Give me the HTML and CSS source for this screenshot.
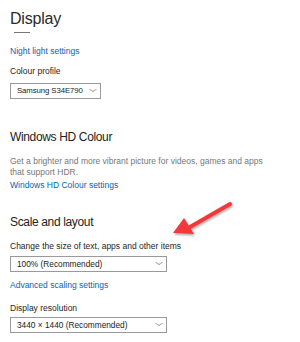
FILE: index.html
```html
<html>
<head>
<meta name="viewport" content="width=device-width, initial-scale=1" />
<title>Display</title>
<link rel="stylesheet" href="styles.css">
</head>
<body>

<div class="page">
    <h1>Display</h1>
    <div class="rule"></div>

    <a class="link night">Night light settings</a>
    <div class="label profile">Colour profile</div>
    <div class="select narrow">Samsung S34E790<span class="chev"></span></div>

    <h2 class="hd">Windows HD Colour</h2>
    <p class="desc">Get a brighter and more vibrant picture for videos, games and apps that support HDR.</p>
    <a class="link hdlink">Windows HD Colour settings</a>

    <h2 class="scale">Scale and layout</h2>
    <div class="label size">Change the size of text, apps and other items</div>
    <div class="select s2">100% (Recommended)<span class="chev"></span></div>
    <a class="link adv">Advanced scaling settings</a>
    <div class="label res">Display resolution</div>
    <div class="select s3">3440 × 1440 (Recommended)<span class="chev"></span></div>

    <svg class="arrow" width="80" height="50" viewBox="0 0 80 50">
        <defs>
            <filter id="sh" x="-20%" y="-20%" width="140%" height="140%">
                <feDropShadow dx="1" dy="1.5" stdDeviation="1" flood-color="#000" flood-opacity="0.35" />
            </filter>
        </defs>
        <g filter="url(#sh)">
            <line x1="60" y1="6" x2="20" y2="29" stroke="#f2393b" stroke-width="4" stroke-linecap="round" />
            <polygon points="3,35 14,20 24,36" fill="#f2393b" />
        </g>
    </svg>
</div>

</body>
</html>
```

FILE: styles.css
```css
body { margin: 0; background: #fff; font-family: "Liberation Sans", Arial, sans-serif; color: #1e1e1e; }
.page { position: relative; padding: 9px 0 0 10px; }
h1 { font-size: 16px; font-weight: normal; line-height: 20px; margin: 0; color: #2a2a2a; letter-spacing: -0.2px; }
.rule { width: 16px; height: 1px; background: #777; margin: 3px 0 0 4px; }
.link { display: block; font-size: 8.5px; line-height: 11px; color: #0067b8; text-decoration: none; }
.label { font-size: 8.5px; line-height: 11px; }
.select { position: relative; box-sizing: border-box; width: 157px; height: 16px; border: 1px solid #9a9a9a; font-size: 8.3px; line-height: 14px; padding-left: 6px; color: #222; }
.select.narrow { width: 91px; font-size: 7.8px; letter-spacing: -0.1px; }
.chev { position: absolute; right: 3px; top: 4px; width: 8px; height: 4px; }
.chev:before, .chev:after { content: ""; position: absolute; top: 2px; width: 5px; height: 1px; background: #aaa; }
.chev:before { left: 0; transform: rotate(35deg); }
.chev:after { right: 0; transform: rotate(-35deg); }
h2 { font-size: 12px; font-weight: normal; line-height: 16px; margin: 0; color: #222; letter-spacing: -0.35px; }
.desc { font-size: 8.5px; line-height: 10.5px; color: #777; margin: 0; width: 256px; }

.night { margin-top: 13px; }
.profile { margin-top: 9px; }
.narrow { margin-top: 6px; }
.hd { margin-top: 30px; }
.desc { margin-top: 11px; }
.hdlink { margin-top: 3px; }
.scale { margin-top: 23px; }
.size { margin-top: 11px; }
.s2 { margin-top: 4px; }
.adv { margin-top: 8px; }
.res { margin-top: 12px; }
.s3 { margin-top: 3px; }

.arrow { position: absolute; left: 170px; top: 198px; }
```
